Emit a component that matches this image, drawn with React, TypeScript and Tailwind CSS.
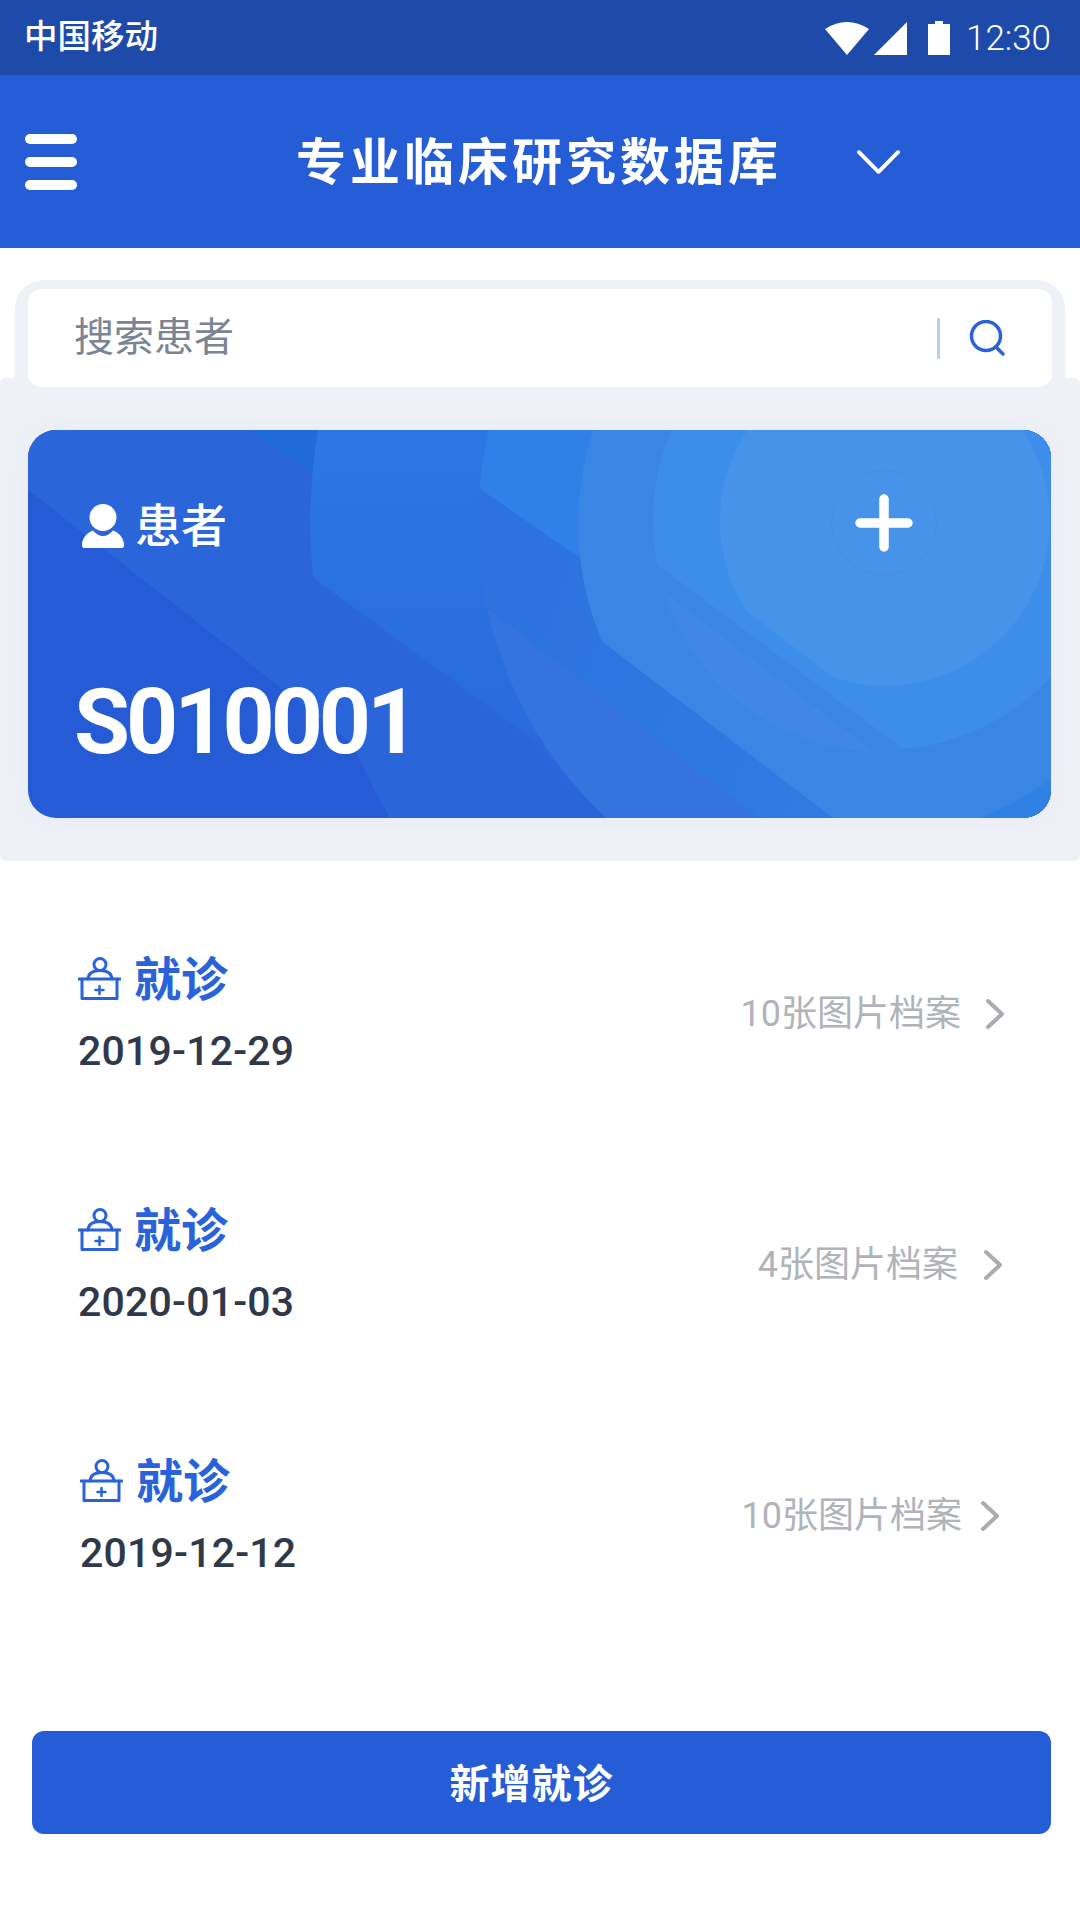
const visits = [
  { date: "2019-12-29", files: "10张图片档案", rowClass: "pl-[78px] pr-[75px]", sideClass: "gap-[24px]" },
  { date: "2020-01-03", files: "4张图片档案", rowClass: "pl-[78px] pr-[77px]", sideClass: "gap-[25px]" },
  { date: "2019-12-12", files: "10张图片档案", rowClass: "pl-[80px] pr-[80px]", sideClass: "gap-[18px]" },
];

function StatusIcons() {
  return (
    <svg width="126" height="36" viewBox="823 20 126 36" fill="#fff">
      <path d="M823 29 Q845 15 867 29 L845 55 Z" />
      <path d="M872 55 L905 22 L905 55 Z" />
      <path d="M926 24 H933 V21 H941 V24 H948 V55 H926 Z" />
    </svg>
  );
}

// concentric rings and diagonal cuts behind the patient card, in page coordinates
function CardArt() {
  return (
    <svg className="absolute inset-0 h-full w-full" viewBox="28 430 1023 389" preserveAspectRatio="none">
      <defs>
        <linearGradient id="midBand" x1="0" y1="0" x2="0" y2="1">
          <stop offset="0" stopColor="#2b78e4" />
          <stop offset="1" stopColor="#2966db" />
        </linearGradient>
        <linearGradient id="ringBand" gradientUnits="userSpaceOnUse" x1="493" y1="600" x2="1051" y2="800">
          <stop offset="0" stopColor="#2d72df" />
          <stop offset="1" stopColor="#2f82e4" />
        </linearGradient>
        <clipPath id="ring406">
          <circle cx="884" cy="523" r="406" />
        </clipPath>
      </defs>
      <rect x="28" y="430" width="1023" height="389" fill="#255cd6" />
      <path d="M28 430 V490 L353 745 Q370 785 390 819 H1051 V430 Z" fill="#2a65da" />
      <path d="M250 430 L316 474 L318 430 Z" fill="#1f6bdc" />
      <path d="M318 430 A574 574 0 0 0 313 578 L540 745 Q570 785 603 819 H1051 V430 Z" fill="url(#midBand)" />
      <g clipPath="url(#ring406)">
        <rect x="470" y="430" width="590" height="389" fill="#3573de" />
        <path d="M470 596 L760 819 H1051 V430 H470 Z" fill="url(#ringBand)" />
        <path d="M470 482 L640 600 V430 H470 Z" fill="#2f81e7" />
      </g>
      <path d="M602 642 L833 819 H980 A306 306 0 0 0 1051 780 V430 H593 A306 306 0 0 0 602 642 Z" fill="#3a86e4" />
      <path d="M663 592 L875 753 A231 231 0 0 1 663 592 Z" fill="#4087e7" />
      <path d="M657 565 L903 750 A230 230 0 1 0 657 565 Z" fill="#3c8eea" />
      <path d="M747 612 L833 678 A165 165 0 1 0 747 612 Z" fill="#4793e9" />
      <circle cx="884" cy="523" r="52.5" fill="none" stroke="#5a78dc" strokeOpacity="0.35" strokeWidth="1" />
    </svg>
  );
}

function PersonIcon() {
  return (
    <svg width="42" height="44" viewBox="0 0 42 44" fill="#fff">
      <circle cx="21" cy="13.5" r="13.5" />
      <path d="M2 44 Q0 44 0 41 C0 34 5 29 11 26.5 C14 30 17 32 21 32 C25 32 28 30 31 26.5 C37 29 42 34 42 41 Q42 44 40 44 Z" />
    </svg>
  );
}

function ClinicIcon() {
  return (
    <svg width="43" height="43" viewBox="0 0 43 43" fill="none" stroke="#2a63d9" strokeWidth="3" strokeLinecap="round" strokeLinejoin="round">
      <circle cx="22" cy="7.5" r="6" />
      <path d="M10 22 C10.5 16 15 13.5 22 13.5 C29 13.5 33.5 16 34 22" />
      <path d="M1 22 H42" />
      <path d="M4 22 V41.5 H39 V22" />
      <path d="M21.5 29 V37 M17.5 33 H25.5" strokeWidth="2.5" />
    </svg>
  );
}

export default function App() {
  return (
    <div className="h-[1920px] w-[1080px] overflow-hidden bg-white font-['Roboto','Noto_Sans_CJK_SC',sans-serif]">
      {/* Status bar */}
      <div className="flex h-[75px] items-center justify-between bg-[#1e4aa9] pl-[24px] pr-[29px] text-white">
        <span className="text-[33.5px] font-medium">中国移动</span>
        <div className="flex items-center gap-[15px]">
          <StatusIcons />
          <span className="pt-[2px] text-[35px] font-light leading-none">12:30</span>
        </div>
      </div>

      {/* Title bar */}
      <header className="flex h-[173px] items-center bg-[#255dd6] pl-[25px] text-white">
        <div className="flex w-[52px] flex-col gap-[13px]">
          <div className="h-[10px] rounded-full bg-white" />
          <div className="h-[10px] rounded-full bg-white" />
          <div className="h-[10px] rounded-full bg-white" />
        </div>
        <h1 className="ml-[219px] mt-[2px] text-[50px] font-bold leading-none tracking-[4px]">专业临床研究数据库</h1>
        <svg className="ml-[75px]" width="43" height="24" viewBox="0 0 44 24" fill="none" stroke="#fff" strokeWidth="4" strokeLinecap="round" strokeLinejoin="round">
          <path d="M2 2 L22 22 L42 2" />
        </svg>
      </header>

      {/* Search */}
      <div className="mx-[15px] mt-[32px] h-[98px] rounded-t-[28px] bg-[#eef1f6] px-[13px] pt-[9px]">
        <div className="relative z-10 flex h-[98px] items-center justify-between rounded-[14px] bg-white pl-[46px] pr-[47px]">
          <span className="text-[40px] leading-none text-[#7b8493]">搜索患者</span>
          <div className="flex items-center gap-[29px]">
            <div className="h-[41px] w-[3px] bg-[#b9cdf4]" />
            <svg width="36" height="36" viewBox="0 0 36 36" fill="none" stroke="#2a63d9" strokeWidth="3.5" strokeLinecap="round">
              <circle cx="17" cy="16" r="14.5" />
              <path d="M27 27 L34 34" />
            </svg>
          </div>
        </div>
      </div>

      {/* Patient card */}
      <section className="rounded-[6px] bg-[#eef1f6] px-[28px] pb-[43px] pt-[52px]">
        <div className="relative h-[388px] w-[1023px] overflow-hidden rounded-[28px] text-white shadow-[0_0_22px_#e6eaf5]">
          <CardArt />
          <div className="relative flex h-full flex-col justify-between pb-[50px] pl-[54px] pt-[73px]">
            <div className="flex items-center gap-[11px]">
              <PersonIcon />
              <span className="text-[46px] font-medium leading-none">患者</span>
            </div>
            <div className="ml-[-8px] text-[91px] font-bold leading-none tracking-[-4px]">S010001</div>
          </div>
          <svg className="absolute left-[827px] top-[64px]" width="58" height="58" viewBox="0 0 58 58" fill="none" stroke="#fff" strokeWidth="9.5" strokeLinecap="round">
            <path d="M29 5 V53 M5 29 H53" />
          </svg>
        </div>
      </section>

      {/* Visit list */}
      <div className="flex flex-col gap-[130px] pt-[92px]">
        {visits.map((visit) => (
          <div key={visit.date} className={`flex h-[121px] items-center justify-between ${visit.rowClass}`}>
            <div className="flex flex-col gap-[23px]">
              <div className="flex h-[50px] items-center gap-[13px]">
                <ClinicIcon />
                <span className="pt-[2px] text-[47px] font-bold leading-none text-[#2a63d9]">就诊</span>
              </div>
              <div className="h-[48px] pt-[1px] text-[41px] font-medium leading-[48px] tracking-[0.2px] text-[#30384b]">{visit.date}</div>
            </div>
            <div className={`flex items-center ${visit.sideClass}`}>
              <span className="text-[36px] leading-none text-[#b0b3b9]">{visit.files}</span>
              <svg width="20" height="32" viewBox="0 0 20 32" fill="none" stroke="#a9acb1" strokeWidth="4" strokeLinecap="round" strokeLinejoin="round">
                <path d="M3 3 L17 16 L3 29" />
              </svg>
            </div>
          </div>
        ))}
      </div>

      <button className="ml-[32px] mt-[155px] flex h-[103px] w-[1019px] items-center justify-center rounded-[12px] bg-[#255dd6] pr-[20px] pt-[4px] text-[40px] font-bold tracking-[1px] text-white">
        新增就诊
      </button>
    </div>
  );
}
